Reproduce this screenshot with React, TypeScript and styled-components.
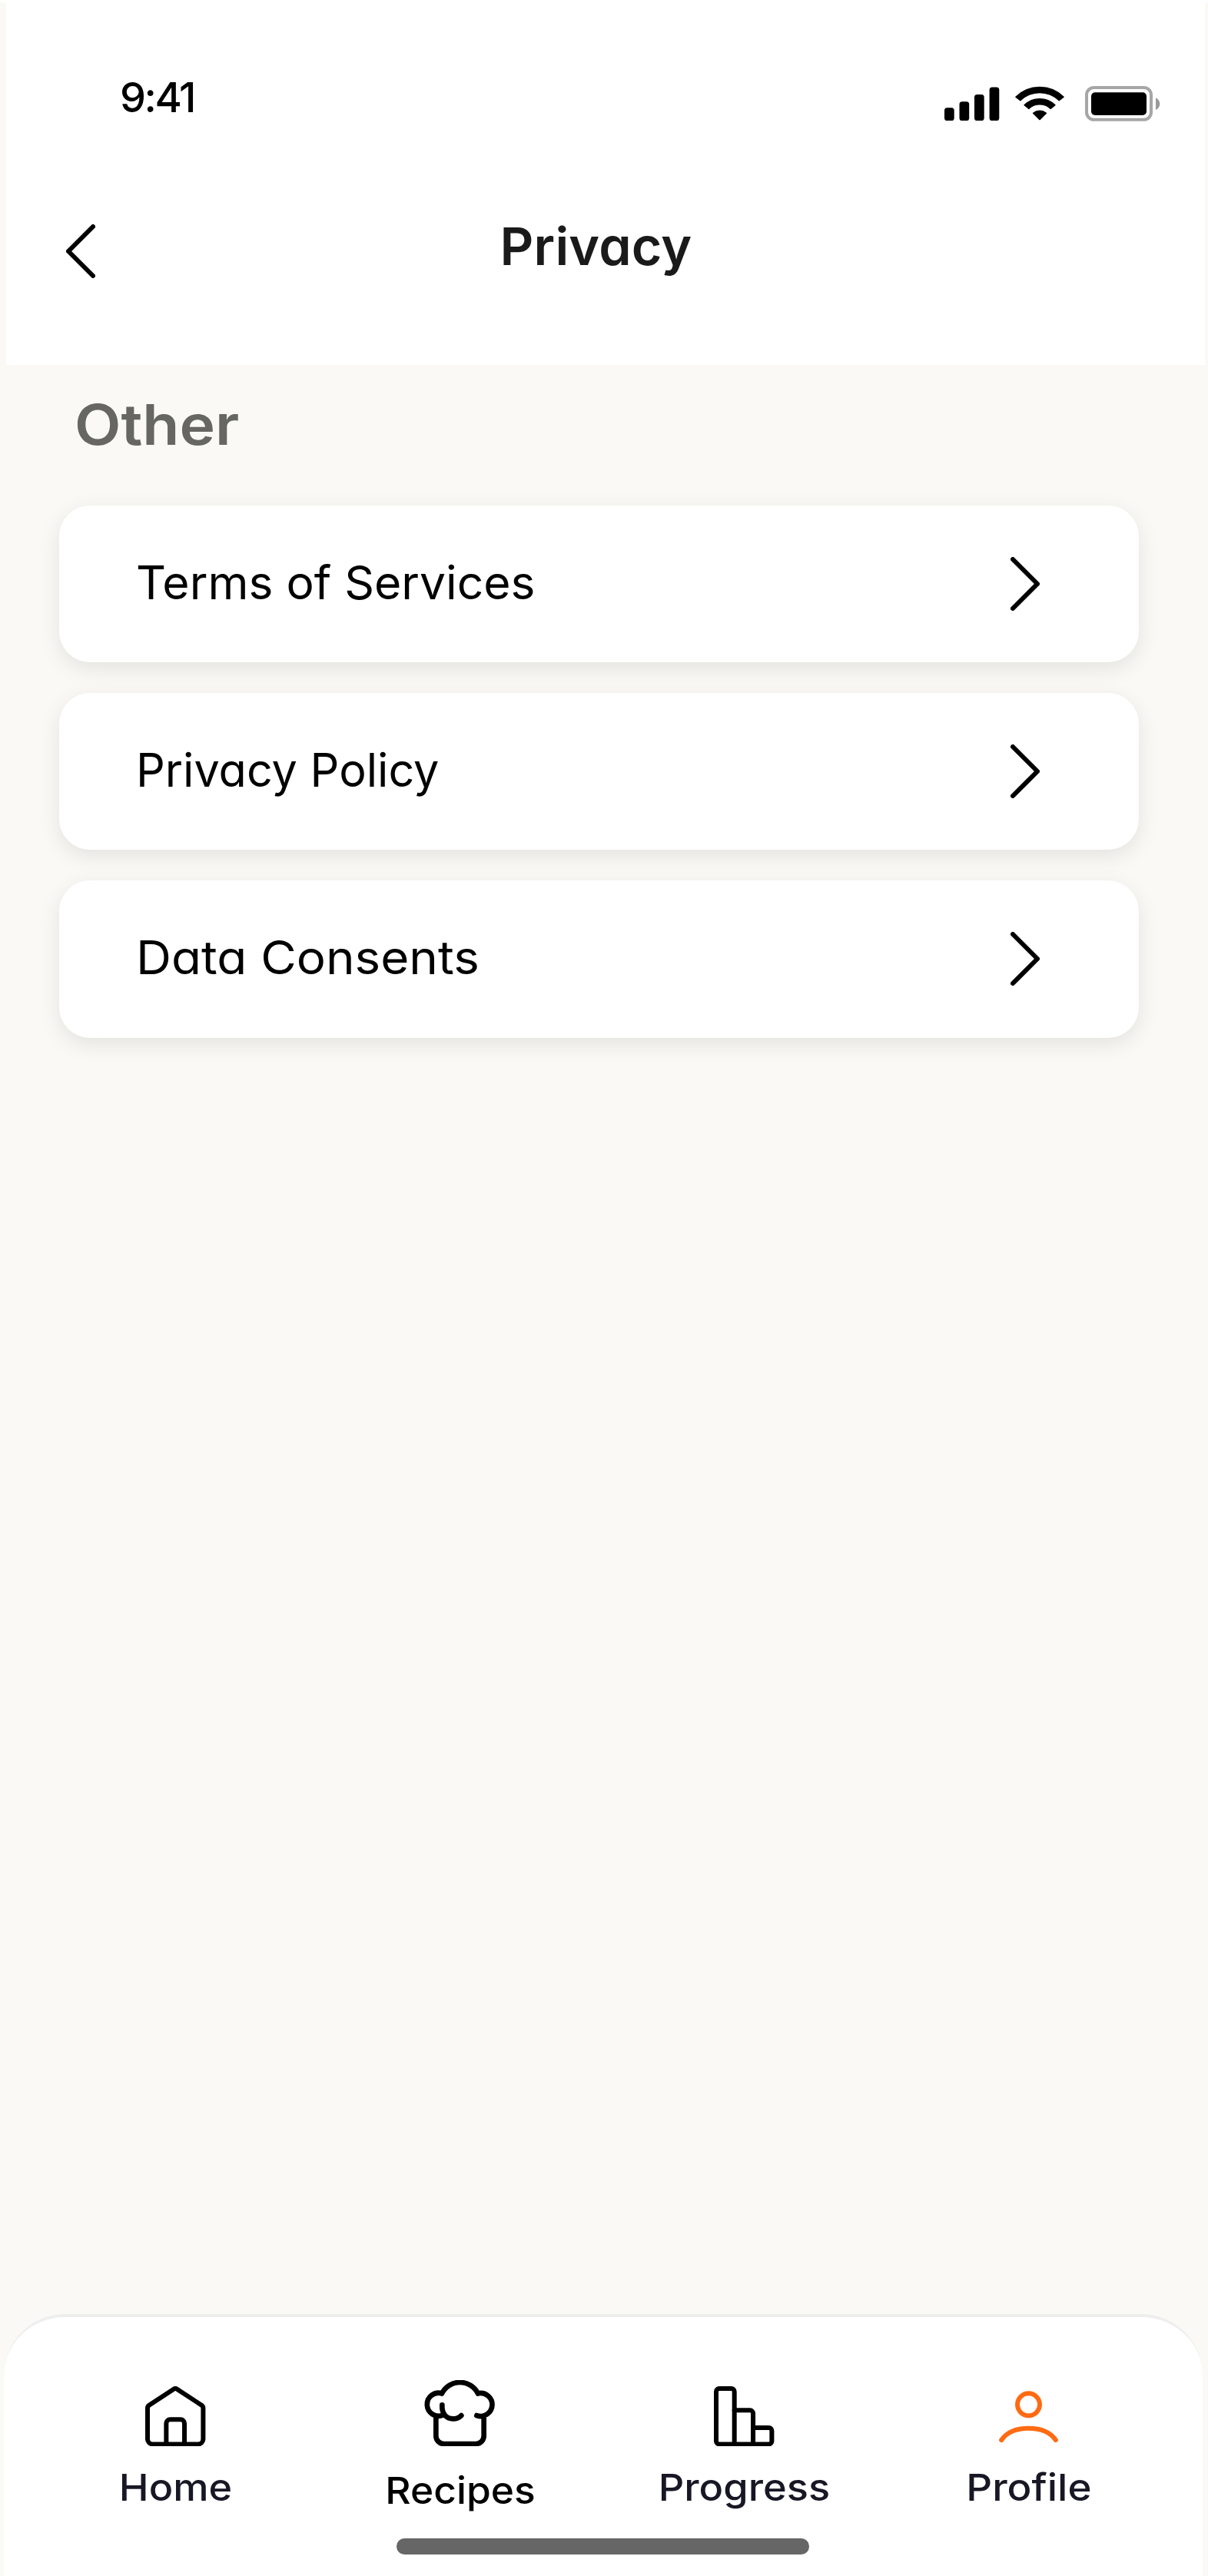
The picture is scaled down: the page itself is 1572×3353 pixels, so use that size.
import React from "react";
import styled, { createGlobalStyle } from "styled-components";

const GlobalStyle = createGlobalStyle`
  * { box-sizing: border-box; }
  body {
    margin: 0;
    background: #faf9f5;
    font-family: Inter, "Liberation Sans", sans-serif;
    font-feature-settings: "cv11";
  }
`;

const Screen = styled.div`
  display: flex;
  flex-direction: column;
  width: 1572px;
  height: 3353px;
  border-top: 3px solid #ffffff;
  background: #faf9f5;
  overflow: hidden;
`;

const Header = styled.header`
  flex: none;
  height: 471.7px;
  margin: 0 4px 0 8px;
  background: #ffffff;
`;

const StatusBar = styled.div`
  display: flex;
  justify-content: space-between;
  align-items: flex-start;
  padding: 92.4px 58.3px 0 148px;
`;

const Time = styled.time`
  font-size: 54px;
  line-height: 64px;
  font-weight: 500;
  letter-spacing: -2.5px;
  color: #000000;
`;

const StatusIcons = styled.div`
  display: flex;
  align-items: flex-start;
  padding-top: 16.4px;

  svg { display: block; }
  svg + svg { margin-left: 20.3px; }
  svg:last-child { margin-left: 27px; }
`;

const TitleBar = styled.div`
  display: grid;
  grid-template-columns: 1fr auto 1fr;
  grid-template-rows: 80px;
  align-items: center;
  height: 80px;
  margin-top: 121px;
  padding: 0 103px 0 78px;
`;

const BackButton = styled.button`
  justify-self: start;
  margin: 14px 0 0;
  padding: 0;
  border: 0;
  background: none;
  line-height: 0;
`;

const Title = styled.h1`
  margin: 0;
  font-size: 68px;
  line-height: 80px;
  font-weight: 600;
  letter-spacing: 0.15px;
  color: #1a1a1a;
`;

const Main = styled.main`
  flex: 1;
  padding: 33.3px 90px 0 77px;
`;

const SectionTitle = styled.h2`
  margin: 0 0 60px;
  padding-left: 20px;
  font-size: 73px;
  line-height: 90px;
  font-weight: 600;
  color: #666663;

  span {
    display: inline-block;
    transform: scaleX(1.077);
    transform-origin: left;
  }
`;

const List = styled.div`
  display: flex;
  flex-direction: column;
  gap: 40px;
`;

const Card = styled.a`
  display: flex;
  align-items: center;
  justify-content: space-between;
  height: 204.2px;
  padding: 0 129px 0 100px;
  border-radius: 40px;
  background: #ffffff;
  box-shadow: 0 8px 28px rgba(0, 0, 0, 0.095);
  line-height: 0;
`;

const CardLabel = styled.span<{ $stretch: number }>`
  margin-bottom: 4px;
  font-size: 60px;
  line-height: 72px;
  font-weight: 400;
  color: #000000;
  transform: scaleX(${(p) => p.$stretch});
  transform-origin: left;
`;

const TabBar = styled.nav`
  flex: none;
  display: flex;
  flex-direction: column;
  align-items: center;
  height: 340.6px;
  margin: 0 7.3px 0 4.7px;
  border-top: 4px solid #eeeeee;
  border-radius: 80px 80px 0 0;
  background: #ffffff;
`;

const Tabs = styled.div`
  display: grid;
  grid-template-columns: repeat(4, 370px);
  height: 207px;
  padding-top: 81.4px;
  margin-bottom: 80.8px;
  margin-right: 2px;
`;

const Tab = styled.a`
  display: flex;
  flex-direction: column;
  align-items: center;
`;

const TabIcon = styled.span<{ $lift?: number }>`
  display: flex;
  align-items: flex-end;
  height: 86.4px;
  padding-bottom: ${(p) => p.$lift ?? 0}px;

  svg { display: block; }
`;

const TabLabel = styled.span<{ $stretch: number; $color: string; $drop?: number }>`
  margin-top: ${(p) => 23.4 + (p.$drop ?? 0)}px;
  font-size: 48.5px;
  line-height: 60px;
  font-weight: 500;
  color: ${(p) => p.$color};
  transform: scaleX(${(p) => p.$stretch});
`;

const HomeIndicator = styled.div`
  flex: none;
  width: 537px;
  height: 20.4px;
  border-radius: 10.2px;
  background: #666666;
`;

const Chevron = ({ left }: { left?: boolean }) => (
  <svg width="38" height="70" viewBox="0 0 38 70" fill="none" stroke="#000" strokeWidth="6" strokeLinecap="round" strokeLinejoin="round">
    <path d={left ? "M35 3 3 35l32 32" : "M3 3l32 32L3 67"} />
  </svg>
);

const SignalIcon = () => (
  <svg width="71.4" height="46" viewBox="0 0 71.4 46">
    <rect x="0" y="28.2" width="12.7" height="16.8" rx="3.6" />
    <rect x="19.5" y="20.2" width="12.7" height="24.8" rx="3.6" />
    <rect x="39" y="10.9" width="12.7" height="34.1" rx="3.6" />
    <rect x="58.6" y="1.4" width="12.7" height="43.6" rx="3.6" />
  </svg>
);

const WifiIcon = () => (
  <svg width="64" height="46" viewBox="0 0 192 138" stroke="#000" strokeWidth="4" strokeLinejoin="round">
    <path d="M2.6 42.6A133 133 0 0 1 189.4 42.6L171.8 56.2A109 109 0 0 0 20.2 56.2Z" />
    <path d="M36 74.5A86 86 0 0 1 156 74.5L138.5 88.5A62 62 0 0 0 53.5 88.5Z" />
    <path d="M70.5 105.5A41 41 0 0 1 121.5 105.5L96 131Z" />
  </svg>
);

const BatteryIcon = () => (
  <svg width="97.7" height="46" viewBox="0 0 97.7 46">
    <rect x="2" y="2" width="84" height="41.8" rx="9.5" fill="none" stroke="#a6a6a6" strokeWidth="4" />
    <rect x="8" y="8.3" width="72" height="29.7" rx="5" />
    <path d="M92 15.2c3.4 1.6 5.3 4.5 5.3 8s-1.9 6.2-5.3 7.8z" fill="#999" />
  </svg>
);

const line = { fill: "none", strokeLinecap: "round", strokeLinejoin: "round" } as const;

const HomeIcon = () => (
  <svg width="78.4" height="78.4" viewBox="568 376 235 235" stroke="#000" strokeWidth="18" {...line}>
    <path d="M577 582V461Q577 454 583 450L678 388Q685.5 382 693 388L788 450Q794 454 794 461V582A20 20 0 0 1 774 602H597A20 20 0 0 1 577 582Z" />
    <path d="M650 602V521A15 15 0 0 1 665 506H706A15 15 0 0 1 721 521V602" />
  </svg>
);

const RecipesIcon = () => (
  <svg width="93" height="86.4" viewBox="336 112 279 259" stroke="#000" strokeWidth="20" {...line}>
    <path d="M405 164A45 45 0 1 0 409 249" />
    <path d="M405 164A79 79 0 0 1 546 164" />
    <path d="M546 164A45 45 0 1 1 541 250" />
    <path d="M382 253V329A31 31 0 0 0 413 361H538A31 31 0 0 0 569 329V253" />
    <path d="M406 209C404 243 422 263 449 263C462 263 474 257 481 250" />
  </svg>
);

const ProgressIcon = () => (
  <svg width="78.4" height="78.4" viewBox="388 136 235 235" stroke="#000" strokeWidth="18" {...line}>
    <path d="M468 361V157A12 12 0 0 0 456 145H409A12 12 0 0 0 397 157V350A12 12 0 0 0 409 362H602A12 12 0 0 0 614 350V310A12 12 0 0 0 602 298H541" />
    <path d="M468 230H529A12 12 0 0 1 541 242V361" />
  </svg>
);

const ProfileIcon = () => (
  <svg width="77" height="67" viewBox="384.5 393 231 201" stroke="#ff6b12" strokeWidth="18" {...line}>
    <circle cx="500" cy="446.5" r="43.5" />
    <path d="M394 585C415 554 452 539 500 539S585 554 606 585" />
  </svg>
);

const links = [
  { label: "Terms of Services", stretch: 1.009 },
  { label: "Privacy Policy", stretch: 0.988 },
  { label: "Data Consents", stretch: 1.062 },
];

const tabs = [
  { label: "Home", icon: <HomeIcon />, stretch: 1.075, color: "#181725" },
  { label: "Recipes", icon: <RecipesIcon />, stretch: 1.062, color: "#000000", drop: 4 },
  { label: "Progress", icon: <ProgressIcon />, stretch: 1.08, color: "#181725" },
  { label: "Profile", icon: <ProfileIcon />, stretch: 1.09, color: "#181725", lift: 5.7 },
];

export default function App() {
  return (
    <>
      <GlobalStyle />
      <Screen>
        <Header>
          <StatusBar>
            <Time>9:41</Time>
            <StatusIcons>
              <SignalIcon />
              <WifiIcon />
              <BatteryIcon />
            </StatusIcons>
          </StatusBar>
          <TitleBar>
            <BackButton aria-label="Back">
              <Chevron left />
            </BackButton>
            <Title>Privacy</Title>
          </TitleBar>
        </Header>
        <Main>
          <SectionTitle>
            <span>Other</span>
          </SectionTitle>
          <List>
            {links.map((item) => (
              <Card key={item.label}>
                <CardLabel $stretch={item.stretch}>{item.label}</CardLabel>
                <Chevron />
              </Card>
            ))}
          </List>
        </Main>
        <TabBar>
          <Tabs>
            {tabs.map((tab) => (
              <Tab key={tab.label}>
                <TabIcon $lift={tab.lift}>{tab.icon}</TabIcon>
                <TabLabel $stretch={tab.stretch} $color={tab.color} $drop={tab.drop}>
                  {tab.label}
                </TabLabel>
              </Tab>
            ))}
          </Tabs>
          <HomeIndicator />
        </TabBar>
      </Screen>
    </>
  );
}
